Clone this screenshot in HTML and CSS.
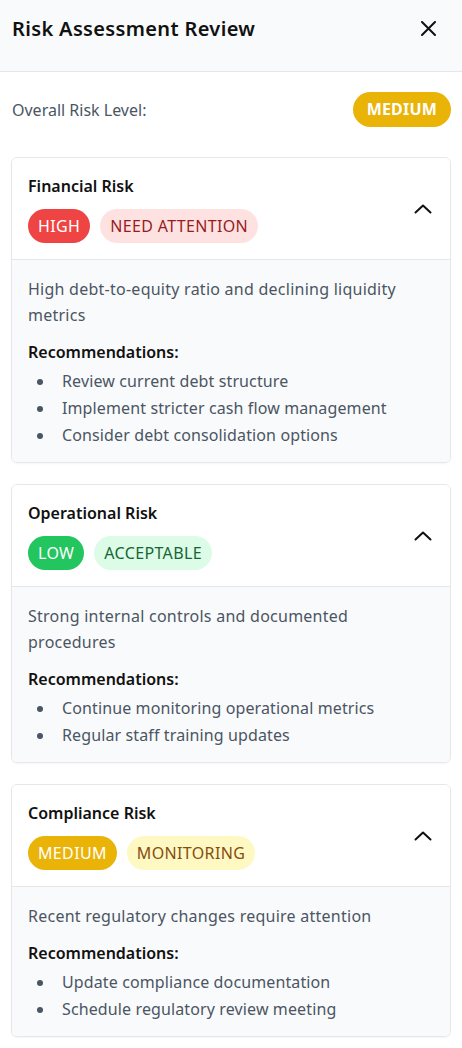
FILE: index.html
```html
<!DOCTYPE html>
<html lang="en">
<head>
<meta charset="utf-8">
<title>Risk Assessment Review</title>
<link rel="stylesheet" href="styles.css">
</head>
<body>
<div class="panel">
  <header class="header">
    <h1 class="title">Risk Assessment Review</h1>
    <button class="close" aria-label="Close">
      <svg width="15" height="15" viewBox="0 0 15 15"><path d="M1 1L14 14M14 1L1 14" stroke="#111" stroke-width="2" stroke-linecap="round" fill="none"/></svg>
    </button>
  </header>
  <main class="content">
    <div class="overall">
      <span class="overall-label">Overall Risk Level:</span>
      <span class="pill pill-strong medium">MEDIUM</span>
    </div>

    <section class="card">
      <div class="card-head">
        <div class="card-info">
          <h2 class="card-title">Financial Risk</h2>
          <div class="badges">
            <span class="pill high">HIGH</span>
            <span class="pill high-soft">NEED ATTENTION</span>
          </div>
        </div>
        <svg class="chev" width="18" height="10" viewBox="0 0 18 10"><path d="M1.5 8.5L9 1.5L16.5 8.5" stroke="#111" stroke-width="2" fill="none" stroke-linecap="round" stroke-linejoin="round"/></svg>
      </div>
      <div class="card-body">
        <p class="desc">High debt-to-equity ratio and declining liquidity metrics</p>
        <h3 class="rec-title">Recommendations:</h3>
        <ul class="rec-list">
          <li>Review current debt structure</li>
          <li>Implement stricter cash flow management</li>
          <li>Consider debt consolidation options</li>
        </ul>
      </div>
    </section>

    <section class="card">
      <div class="card-head">
        <div class="card-info">
          <h2 class="card-title">Operational Risk</h2>
          <div class="badges">
            <span class="pill low">LOW</span>
            <span class="pill low-soft">ACCEPTABLE</span>
          </div>
        </div>
        <svg class="chev" width="18" height="10" viewBox="0 0 18 10"><path d="M1.5 8.5L9 1.5L16.5 8.5" stroke="#111" stroke-width="2" fill="none" stroke-linecap="round" stroke-linejoin="round"/></svg>
      </div>
      <div class="card-body">
        <p class="desc">Strong internal controls and documented procedures</p>
        <h3 class="rec-title">Recommendations:</h3>
        <ul class="rec-list">
          <li>Continue monitoring operational metrics</li>
          <li>Regular staff training updates</li>
        </ul>
      </div>
    </section>

    <section class="card">
      <div class="card-head">
        <div class="card-info">
          <h2 class="card-title">Compliance Risk</h2>
          <div class="badges">
            <span class="pill medium">MEDIUM</span>
            <span class="pill medium-soft">MONITORING</span>
          </div>
        </div>
        <svg class="chev" width="18" height="10" viewBox="0 0 18 10"><path d="M1.5 8.5L9 1.5L16.5 8.5" stroke="#111" stroke-width="2" fill="none" stroke-linecap="round" stroke-linejoin="round"/></svg>
      </div>
      <div class="card-body">
        <p class="desc">Recent regulatory changes require attention</p>
        <h3 class="rec-title">Recommendations:</h3>
        <ul class="rec-list">
          <li>Update compliance documentation</li>
          <li>Schedule regulatory review meeting</li>
        </ul>
      </div>
    </section>
  </main>
</div>
</body>
</html>
```
FILE: styles.css
```css
* { box-sizing: border-box; }
html, body { margin: 0; padding: 0; background: #ffffff; }
body {
  font-family: "Noto Sans", "Open Sans", sans-serif;
  font-size: 16px;
  color: #111827;
}
.header {
  height: 72px;
  background: #f9fafb;
  border-bottom: 1px solid #e5e7eb;
  display: flex;
  justify-content: space-between;
  align-items: flex-start;
  padding: 15px 12px 0 12px;
}
.title {
  margin: 0;
  font-size: 20px;
  line-height: 28px;
  font-weight: 600;
  letter-spacing: 0.35px;
  color: #111;
}
.close {
  border: 0;
  background: transparent;
  padding: 0;
  margin: 6px 14px 0 0;
  width: 15px;
  height: 15px;
  display: flex;
}
.content {
  padding: 20px 11px 0 11px;
}
.overall {
  display: flex;
  justify-content: space-between;
  align-items: center;
  margin-bottom: 30px;
}
.overall-label {
  color: #4b5563;
  font-size: 16px;
  padding-left: 1px;
}
.pill {
  display: inline-block;
  border-radius: 999px;
  font-size: 16px;
  line-height: 26px;
  padding: 4px 10px;
  letter-spacing: 0.35px;
  white-space: nowrap;
}
.pill-strong {
  font-weight: 700;
  letter-spacing: 0.2px;
  padding: 4px 14px 5px;
  color: #fff;
}
.high { background: #ef4444; color: #fff; }
.high-soft { background: #fee2e2; color: #991b1b; }
.low { background: #22c55e; color: #fff; }
.low-soft { background: #dcfce7; color: #166534; }
.medium { background: #eab308; color: #fff; }
.medium-soft { background: #fef9c3; color: #854d0e; }

.card {
  border: 1px solid #e5e7eb;
  border-radius: 6px;
  overflow: hidden;
  margin-bottom: 21px;
  box-shadow: 0 1px 2px rgba(0,0,0,0.04);
}
.card-head {
  display: flex;
  justify-content: space-between;
  align-items: center;
  padding: 16px 18px 16px 16px;
  border-bottom: 1px solid #e5e7eb;
  background: #fff;
}
.card-title {
  margin: 0;
  font-size: 16px;
  line-height: 24px;
  font-weight: 600;
  color: #111;
}
.badges {
  display: flex;
  gap: 10px;
  margin-top: 11px;
}
.chev { display: block; }
.card-body {
  background: #f9fafb;
  padding: 16px 16px 13px 16px;
}
.desc {
  margin: 0;
  color: #4b5563;
  line-height: 26px;
  letter-spacing: 0.25px;
}
.rec-title {
  margin: 12px 0 4px 0;
  font-size: 16px;
  line-height: 24px;
  font-weight: 600;
  color: #111;
}
.rec-list {
  list-style: none;
  margin: 0;
  padding: 0;
}
.rec-list li {
  display: flex;
  align-items: center;
  line-height: 27px;
  color: #4b5563;
  letter-spacing: 0.12px;
}
.rec-list li::before {
  content: "";
  width: 6px;
  height: 6px;
  border-radius: 50%;
  background: #4b5563;
  margin: 0 19px 0 9px;
  flex-shrink: 0;
}
```
